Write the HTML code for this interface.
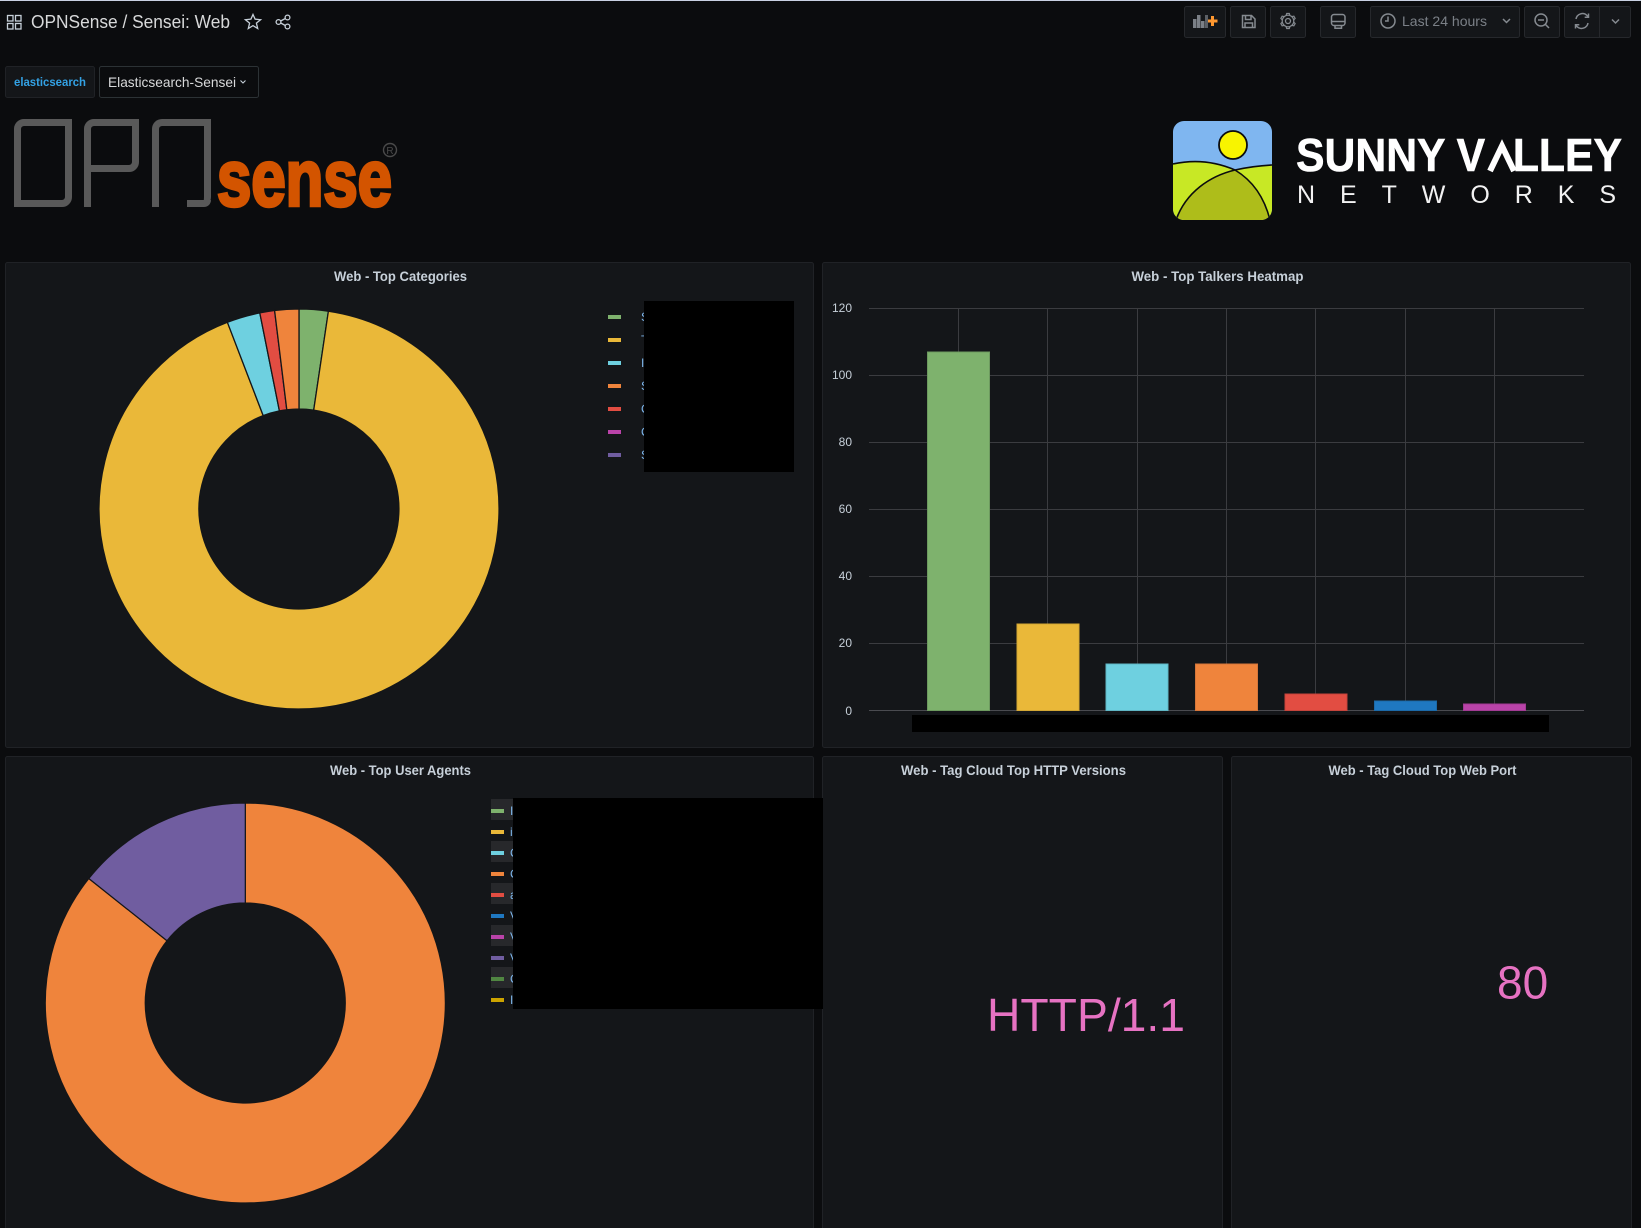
<!DOCTYPE html>
<html lang="en">
<head>
<meta charset="utf-8">
<title>OPNSense / Sensei: Web</title>
<style>
html,body{margin:0;padding:0;background:#0b0c0e;width:1641px;height:1228px;overflow:hidden}
svg{position:absolute;left:0;top:0}
text{font-family:"Liberation Sans",Arial,sans-serif}
.ttl{font-size:14px;font-weight:700;fill:#c7d0d9;text-anchor:middle}
.yl{font-size:12px;fill:#c7d0d9;text-anchor:end}
.lg{font-size:12px;fill:#7fb8ee}
.ic{fill:none;stroke:#858a90;stroke-width:1.5}
.tc{font-size:46px;fill:#e672c2}
.l{position:absolute;background:#595959}
.b{position:absolute;border:7px solid #595959;box-sizing:border-box}
</style>
</head>
<body>
<svg width="1641" height="1228" viewBox="0 0 1641 1228" xmlns="http://www.w3.org/2000/svg">
<defs><clipPath id="sv"><rect x="1173" y="121" width="99" height="99" rx="11"/></clipPath></defs>
<rect width="1641" height="1228" fill="#0b0c0e"/>
<rect width="1641" height="1" fill="#c9d1e3"/>

<!-- header left -->
<g fill="none" stroke="#c7d0d9" stroke-width="1.3">
<rect x="7.5" y="15.5" width="5.5" height="5.5"/><rect x="15.5" y="15.5" width="5.5" height="5.5"/>
<rect x="7.5" y="23.5" width="5.5" height="5.5"/><rect x="15.5" y="23.5" width="5.5" height="5.5"/>
<polygon points="253,14.5 255.1,19.1 260.6,19.7 256.4,23.1 257.7,28.5 253,25.6 248.3,28.5 249.6,23.1 245.4,19.7 250.9,19.1"/>
<circle cx="278.5" cy="22" r="2.4"/><circle cx="287.5" cy="17.5" r="2.4"/><circle cx="287.5" cy="26.5" r="2.4"/>
<path d="M280.7 21l4.6-2.5M280.7 23l4.6 2.5"/>
</g>
<text x="31" y="28" font-size="18" fill="#d8d9da" textLength="199" lengthAdjust="spacingAndGlyphs">OPNSense / Sensei: Web</text>

<!-- toolbar -->
<g fill="#141619" stroke="#26282c">
<rect x="1184.5" y="6.5" width="41" height="31" rx="2"/>
<rect x="1230.5" y="6.5" width="35" height="31" rx="2"/>
<rect x="1270.5" y="6.5" width="35" height="31" rx="2"/>
<rect x="1320.5" y="6.5" width="35" height="31" rx="2"/>
<rect x="1370.5" y="6.5" width="149" height="31" rx="2"/>
<rect x="1524.5" y="6.5" width="35" height="31" rx="2"/>
<rect x="1564.5" y="6.5" width="66" height="31" rx="2"/>
<path d="M1599.5 6.5v31"/>
</g>
<g fill="#7b8087">
<rect x="1193" y="19" width="3.5" height="9"/><rect x="1197" y="15" width="3.5" height="13"/><rect x="1201" y="21" width="3.5" height="7"/><rect x="1205" y="15" width="3" height="13" opacity=".7"/>
</g>
<path d="M1208 19.5h3v-3.5h3v3.5h3.500v3h-3.500v3.500h-3v-3.500h-3z" fill="#ff9830"/>
<g class="ic">
<path d="M1242.500 15.500h9l3.500 3.500v8.500h-12.500zM1245.500 15.500v4h5.500v-4M1245 27.500v-4.500h7.500v4.500"/>
<circle cx="1288" cy="21" r="2.500" stroke-width="1.300"/><circle cx="1288" cy="21" r="5.800" stroke-width="1.200"/>
<g stroke-width="1.200">
<path transform="translate(1288 21)" d="M-1.900 -5.600L-1.300 -7.500H1.300L1.900 -5.600"/>
<path transform="translate(1288 21) rotate(60)" d="M-1.900 -5.600L-1.300 -7.500H1.300L1.900 -5.600"/>
<path transform="translate(1288 21) rotate(120)" d="M-1.900 -5.600L-1.300 -7.500H1.300L1.900 -5.600"/>
<path transform="translate(1288 21) rotate(180)" d="M-1.900 -5.600L-1.300 -7.500H1.300L1.900 -5.600"/>
<path transform="translate(1288 21) rotate(240)" d="M-1.900 -5.600L-1.300 -7.500H1.300L1.900 -5.600"/>
<path transform="translate(1288 21) rotate(300)" d="M-1.900 -5.600L-1.300 -7.500H1.300L1.900 -5.600"/>
</g>
<rect x="1331.500" y="14.500" width="13.500" height="11" rx="2.500"/><path d="M1331.500 21.500h13.500M1335 25.500v2.800h6.500v-2.800"/>
<circle cx="1388" cy="21" r="7"/><path d="M1388 16.500v4.500h-3"/>
<path d="M1503 19l3.500 3.500 3.500-3.500M1612 19.500l3.500 3.500 3.500-3.500"/>
<circle cx="1541" cy="20" r="6"/><path d="M1538 20h6M1545.500 24.500l3.500 3.500"/>
<path d="M1576 19a6.500 6.500 0 0 1 11-3.500l1.500 1.500M1588.500 13.500v3.800h-3.800M1588 23a6.500 6.500 0 0 1-11 3.500l-1.500-1.500M1575.500 28.500v-3.800h3.800"/>
</g>
<text x="1402" y="26" font-size="14" fill="#7b8087" textLength="85" lengthAdjust="spacingAndGlyphs">Last 24 hours</text>

<!-- variable row -->
<rect x="5.500" y="66.500" width="89" height="31" rx="2" fill="#141619" stroke="#202226"/>
<rect x="99.500" y="66.500" width="159" height="31" rx="2" fill="#0b0c0e" stroke="#2c3235"/>
<text x="14" y="86" font-size="12" font-weight="700" fill="#33a2e5" textLength="72" lengthAdjust="spacingAndGlyphs">elasticsearch</text>
<text x="108" y="87" font-size="14" fill="#d8d9da" textLength="128" lengthAdjust="spacingAndGlyphs">Elasticsearch-Sensei</text>
<path d="M240.500 80.500l2.500 2.500 2.500-2.500" fill="none" stroke="#c7d0d9" stroke-width="1.100"/>

<!-- OPNsense logo: sense + registered -->
<text x="217" y="205.500" font-size="80" font-weight="700" fill="#d35400" stroke="#d35400" stroke-width="3.500" textLength="175" lengthAdjust="spacingAndGlyphs">sense</text>
<circle cx="390" cy="150" r="6.500" fill="none" stroke="#4a4a4a" stroke-width="1.400"/>
<text x="390" y="154" font-size="10" fill="#4a4a4a" text-anchor="middle">R</text>

<!-- Sunny Valley logo -->
<g clip-path="url(#sv)">
<rect x="1173" y="121" width="99" height="99" fill="#7fb6f0"/>
<path d="M1173 164Q1205 157 1235 170Q1253 166 1272 165V220H1173Z" fill="#c8e825"/>
<path d="M1176 220C1186 192 1210 176 1235 170C1255 182 1265 200 1270 220Z" fill="#aebd1a"/>
<path d="M1173 164Q1205 157 1235 170C1255 182 1265 200 1270 220M1176 220C1186 192 1210 176 1235 170Q1253 166 1272 165" fill="none" stroke="#0b0c0e" stroke-width="1.600"/>
</g>
<circle cx="1233" cy="145" r="14" fill="#f8f400" stroke="#0b0c0e" stroke-width="1.800"/>
<text x="1296" y="171" font-size="46" font-weight="700" fill="#fff" stroke="#fff" stroke-width=".6" textLength="326" lengthAdjust="spacingAndGlyphs">SUNNY V<tspan fill="transparent" stroke="none">A</tspan>LLEY</text>
<polyline points="1490,171 1502,146 1514,171" fill="none" stroke="#fff" stroke-width="6"/>
<text x="1297" y="203" font-size="25" fill="#f2f2f2" textLength="319">NETWORKS</text>

<!-- panels -->
<g fill="#141619" stroke="#202226">
<rect x="5.500" y="262.500" width="808" height="485" rx="2"/>
<rect x="822.500" y="262.500" width="808" height="485" rx="2"/>
<rect x="5.500" y="756.500" width="808" height="490" rx="2"/>
<rect x="822.500" y="756.500" width="400" height="490" rx="2"/>
<rect x="1231.500" y="756.500" width="400" height="490" rx="2"/>
</g>
<text class="ttl" x="400.500" y="281" textLength="133" lengthAdjust="spacingAndGlyphs">Web - Top Categories</text>
<text class="ttl" x="1217.500" y="281" textLength="172" lengthAdjust="spacingAndGlyphs">Web - Top Talkers Heatmap</text>
<text class="ttl" x="400.500" y="775" textLength="141" lengthAdjust="spacingAndGlyphs">Web - Top User Agents</text>
<text class="ttl" x="1013.500" y="775" textLength="225" lengthAdjust="spacingAndGlyphs">Web - Tag Cloud Top HTTP Versions</text>
<text class="ttl" x="1422.500" y="775" textLength="188" lengthAdjust="spacingAndGlyphs">Web - Tag Cloud Top Web Port</text>

<!-- donut 1 -->
<g stroke="#141619" stroke-width="1.300">
<path d="M299 309A200 200 0 0 1 328.400 311.200L313.700 410.100A100 100 0 0 0 299 409Z" fill="#7eb26d"/>
<path d="M328.400 311.200A200 200 0 1 1 227.400 322.300L263.200 415.600A100 100 0 1 0 313.700 410.100Z" fill="#eab839"/>
<path d="M227.400 322.300A200 200 0 0 1 259.800 312.900L279.400 410.900A100 100 0 0 0 263.200 415.600Z" fill="#6ed0e0"/>
<path d="M259.800 312.900A200 200 0 0 1 274.600 310.500L286.800 409.750A100 100 0 0 0 279.400 410.900Z" fill="#e24d42"/>
<path d="M274.600 310.500A200 200 0 0 1 299 309L299 409A100 100 0 0 0 286.800 409.750Z" fill="#ef843c"/>
</g>

<!-- legend 1 -->
<g>
<rect x="608" y="315" width="13" height="4" fill="#7eb26d"/>
<rect x="608" y="338" width="13" height="4" fill="#eab839"/>
<rect x="608" y="361" width="13" height="4" fill="#6ed0e0"/>
<rect x="608" y="384" width="13" height="4" fill="#ef843c"/>
<rect x="608" y="407" width="13" height="4" fill="#e24d42"/>
<rect x="608" y="430" width="13" height="4" fill="#ba43a9"/>
<rect x="608" y="453" width="13" height="4" fill="#705da0"/>
</g>
<text class="lg" x="641" y="321">S</text>
<text class="lg" x="641" y="344">T</text>
<text class="lg" x="641" y="367">I</text>
<text class="lg" x="641" y="390">S</text>
<text class="lg" x="641" y="413">C</text>
<text class="lg" x="641" y="436">C</text>
<text class="lg" x="641" y="459">S</text>
<rect x="644" y="301" width="150" height="171" fill="#000"/>

<!-- bar chart -->
<g stroke="#3b3c40" stroke-width="1">
<path d="M869 308.500H1584M869 375.500H1584M869 442.500H1584M869 509.500H1584M869 576.500H1584M869 643.500H1584"/>
<path d="M958.500 308V711M1047.500 308V711M1137.500 308V711M1226.500 308V711M1315.500 308V711M1405.500 308V711M1494.500 308V711"/>
</g>
<path d="M869 710.500H1584" stroke="#4a4b50" stroke-width="1"/>
<text class="yl" x="852" y="312">120</text>
<text class="yl" x="852" y="379">100</text>
<text class="yl" x="852" y="446">80</text>
<text class="yl" x="852" y="513">60</text>
<text class="yl" x="852" y="580">40</text>
<text class="yl" x="852" y="647">20</text>
<text class="yl" x="852" y="715">0</text>
<rect x="927.500" y="352" width="62" height="358.500" fill="#7eb26d" stroke="#6d9a5f"/>
<rect x="1017" y="624" width="62" height="86.500" fill="#eab839" stroke="#d3a734"/>
<rect x="1106" y="664" width="62" height="46.500" fill="#6ed0e0" stroke="#5fb6c4"/>
<rect x="1195.500" y="664" width="62" height="46.500" fill="#ef843c" stroke="#d5763a"/>
<rect x="1285" y="694" width="62" height="16.500" fill="#e24d42" stroke="#c5443b"/>
<rect x="1374.500" y="701" width="62" height="9.500" fill="#1f78c1" stroke="#1c6aa8"/>
<rect x="1463.500" y="704" width="62" height="6.500" fill="#ba43a9" stroke="#a23b93"/>
<rect x="912" y="715" width="637" height="17" fill="#000"/>

<!-- donut 2 -->
<g stroke="#141619" stroke-width="1.200">
<path d="M245.300 803A200 200 0 1 1 88.800 878.500L167 940.750A100 100 0 1 0 245.300 903Z" fill="#ef843c"/>
<path d="M88.800 878.500A200 200 0 0 1 245.300 803L245.300 903A100 100 0 0 0 167 940.750Z" fill="#705da0"/>
</g>

<!-- legend 2 -->
<g fill="#27282b">
<rect x="491" y="799" width="23" height="21"/>
<rect x="491" y="841" width="23" height="21"/>
<rect x="491" y="883" width="23" height="21"/>
<rect x="491" y="925" width="23" height="21"/>
<rect x="491" y="967" width="23" height="21"/>
</g>
<g>
<rect x="491" y="809" width="13" height="4" fill="#7eb26d"/>
<rect x="491" y="830" width="13" height="4" fill="#eab839"/>
<rect x="491" y="851" width="13" height="4" fill="#6ed0e0"/>
<rect x="491" y="872" width="13" height="4" fill="#ef843c"/>
<rect x="491" y="893" width="13" height="4" fill="#e24d42"/>
<rect x="491" y="914" width="13" height="4" fill="#1f78c1"/>
<rect x="491" y="935" width="13" height="4" fill="#ba43a9"/>
<rect x="491" y="956" width="13" height="4" fill="#705da0"/>
<rect x="491" y="977" width="13" height="4" fill="#508642"/>
<rect x="491" y="998" width="13" height="4" fill="#cca300"/>
</g>
<text class="lg" x="510" y="815">I</text>
<text class="lg" x="510" y="836">i</text>
<text class="lg" x="510" y="857">C</text>
<text class="lg" x="510" y="878">C</text>
<text class="lg" x="510" y="899">a</text>
<text class="lg" x="510" y="920">V</text>
<text class="lg" x="510" y="941">V</text>
<text class="lg" x="510" y="962">V</text>
<text class="lg" x="510" y="983">C</text>
<text class="lg" x="510" y="1004">I</text>
<rect x="513" y="798" width="310" height="211" fill="#000"/>

<!-- tag clouds -->
<text class="tc" x="987" y="1031" textLength="198" lengthAdjust="spacingAndGlyphs">HTTP/1.1</text>
<text class="tc" x="1497" y="998.500">80</text>
</svg>

<!-- OPN logo mark built from CSS shapes -->
<div aria-label="OPN" style="position:absolute;left:0;top:0">
<div class="b" style="left:14px;top:119px;width:58px;height:88px;border-radius:10px 0 10px 0"></div>
<div class="b" style="left:84px;top:119px;width:55px;height:53px;border-radius:10px 0 10px 0"></div>
<div class="l" style="left:84px;top:160px;width:7px;height:47px"></div>
<div class="b" style="left:152px;top:119px;width:59px;height:88px;border-bottom:0;border-radius:10px 0 10px 0"></div>
<div class="l" style="left:187px;top:200px;width:24px;height:7px;border-radius:0 0 10px 0"></div>
</div>
</body>
</html>
